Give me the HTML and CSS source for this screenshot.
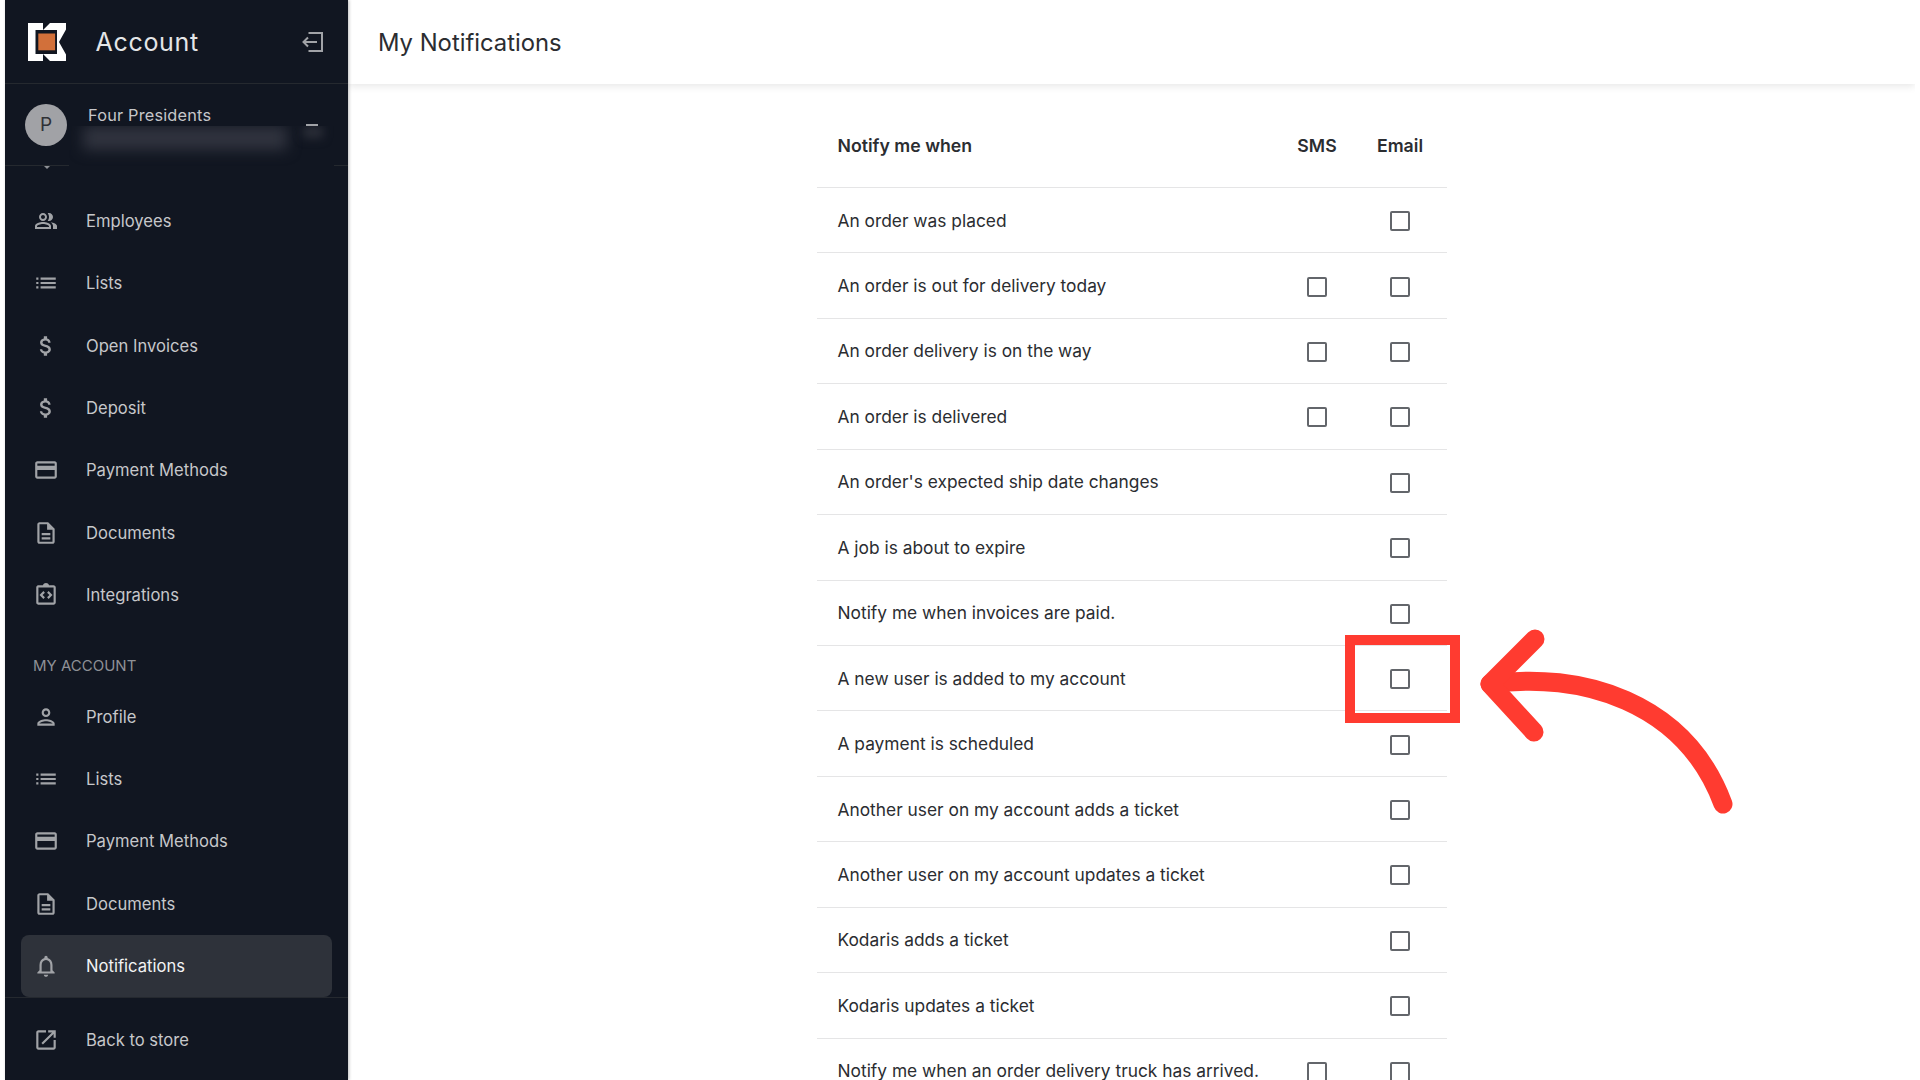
FILE: index.html
```html
<!DOCTYPE html>
<html lang="en">
<head>
<meta charset="utf-8">
<title>My Notifications</title>
<link rel="stylesheet" href="styles.css">
</head>
<body>
<svg class="defs" width="0" height="0" aria-hidden="true">
  <defs>
    <symbol id="i-people" viewBox="0 0 24 24"><path d="M16.67 13.13C18.04 14.06 19 15.32 19 17v3h4v-3c0-2.18-3.57-3.47-6.33-3.87zM15 12c2.21 0 4-1.79 4-4s-1.79-4-4-4c-.47 0-.91.1-1.33.24C14.5 5.27 15 6.58 15 8s-.5 2.73-1.33 3.76c.42.14.86.24 1.33.24zM9 12c2.21 0 4-1.79 4-4s-1.79-4-4-4-4 1.79-4 4 1.79 4 4 4zm0-6c1.1 0 2 .9 2 2s-.9 2-2 2-2-.9-2-2 .9-2 2-2zm0 7c-2.67 0-8 1.34-8 4v3h16v-3c0-2.66-5.33-4-8-4zm6 5H3v-.99C3.2 16.29 6.3 15 9 15s5.8 1.29 6 2v1z"/></symbol>
    <symbol id="i-list" viewBox="0 0 24 24"><path d="M3 13h2v-2H3v2zm0 4h2v-2H3v2zm0-8h2V7H3v2zm4 4h14v-2H7v2zm0 4h14v-2H7v2zM7 7v2h14V7H7z"/></symbol>
    <symbol id="i-dollar" viewBox="0 0 24 24"><path d="M11.8 10.9c-2.27-.59-3-1.2-3-2.15 0-1.09 1.01-1.85 2.7-1.85 1.78 0 2.44.85 2.5 2.1h2.21c-.07-1.72-1.12-3.3-3.21-3.81V3h-3v2.16c-1.94.42-3.5 1.68-3.5 3.61 0 2.31 1.91 3.46 4.7 4.13 2.5.6 3 1.48 3 2.41 0 .69-.49 1.79-2.7 1.79-2.06 0-2.87-.92-2.98-2.1h-2.2c.12 2.19 1.76 3.42 3.68 3.83V21h3v-2.15c1.95-.37 3.5-1.5 3.5-3.55 0-2.84-2.43-3.81-4.7-4.4z"/></symbol>
    <symbol id="i-card" viewBox="0 0 24 24"><path d="M20 4H4c-1.11 0-1.99.89-1.99 2L2 18c0 1.11.89 2 2 2h16c1.11 0 2-.89 2-2V6c0-1.11-.89-2-2-2zm0 14H4v-6h16v6zm0-10H4V6h16v2z"/></symbol>
    <symbol id="i-doc" viewBox="0 0 24 24"><path d="M8 16h8v2H8zm0-4h8v2H8zm6-10H6c-1.1 0-2 .9-2 2v16c0 1.1.89 2 1.99 2H18c1.1 0 2-.9 2-2V8l-6-6zm4 18H6V4h7v5h5v11z"/></symbol>
    <symbol id="i-integ" viewBox="0 0 24 24"><path d="M11 14.17L8.83 12 11 9.83 9.59 8.41 6 12l3.59 3.59zm3.41 1.42L18 12l-3.59-3.59L13 9.83 15.17 12 13 14.17zM19 3h-4.18C14.4 1.84 13.3 1 12 1s-2.4.84-2.82 2H5c-.14 0-.27.01-.4.04-.39.08-.74.28-1.01.55-.18.18-.33.4-.43.64-.1.23-.16.49-.16.77v14c0 .27.06.54.16.78s.25.45.43.64c.27.27.62.47 1.01.55.13.02.26.03.4.03h14c1.1 0 2-.9 2-2V5c0-1.1-.9-2-2-2zm0 16H5V5h14v14z"/></symbol>
    <symbol id="i-person" viewBox="0 0 24 24"><path d="M12 6c1.1 0 2 .9 2 2s-.9 2-2 2-2-.9-2-2 .9-2 2-2m0 10c2.7 0 5.8 1.29 6 2H6c.23-.72 3.31-2 6-2m0-12C9.79 4 8 5.79 8 8s1.79 4 4 4 4-1.79 4-4-1.79-4-4-4zm0 10c-2.67 0-8 1.34-8 4v2h16v-2c0-2.66-5.33-4-8-4z"/></symbol>
    <symbol id="i-bell" viewBox="0 0 24 24"><path d="M12 22c1.1 0 2-.9 2-2h-4c0 1.1.9 2 2 2zm6-6v-5c0-3.07-1.63-5.64-4.5-6.32V4c0-.83-.67-1.5-1.5-1.5s-1.5.67-1.5 1.5v.68C7.64 5.36 6 7.92 6 11v5l-2 2v1h16v-1l-2-2zm-2 1H8v-6c0-2.48 1.51-4.5 4-4.5s4 2.02 4 4.5v6z"/></symbol>
    <symbol id="i-open" viewBox="0 0 24 24"><path d="M19 19H5V5h7V3H5c-1.11 0-2 .9-2 2v14c0 1.1.89 2 2 2h14c1.1 0 2-.9 2-2v-7h-2v7zM14 3v2h3.59l-9.83 9.83 1.41 1.41L19 6.41V10h2V3h-7z"/></symbol>
  </defs>
</svg>
<div class="page">
  <aside class="sidebar">
    <div class="brand">
      <svg class="logo" viewBox="0 0 38 38"><path fill="#fff" d="M0 0H15V7H7.500V31H15V38H0Z"/><path fill="#fff" d="M15 7 22 0H38V6.500L31 19 38 31.500V38H22L15 31H29V7Z"/><rect x="10.300" y="10.500" width="16.800" height="16.800" fill="#d2703a"/></svg>
      <span class="brand-name">Account</span>
      <svg class="exit" viewBox="0 0 21 20"><path d="M6.500 1H20V19H6.500M1.500 10H15M6 5.500 1.500 10 6 14.500" fill="none" stroke="#a1a3a7" stroke-width="2"/></svg>
    </div>
    <div class="user">
      <span class="avatar">P</span>
      <div class="user-text">
        <div class="user-name">Four Presidents</div>
      </div>
      <span class="collapse"></span>
      <div class="mask"><div class="smear"></div><div class="glow"></div></div>
      <span class="peek"></span>
    </div>
    <nav class="nav">
      <a class="item"><svg class="ico people"><use href="#i-people"/></svg>Employees</a>
      <a class="item"><svg class="ico"><use href="#i-list"/></svg>Lists</a>
      <a class="item"><svg class="ico"><use href="#i-dollar"/></svg>Open Invoices</a>
      <a class="item"><svg class="ico"><use href="#i-dollar"/></svg>Deposit</a>
      <a class="item"><svg class="ico"><use href="#i-card"/></svg>Payment Methods</a>
      <a class="item"><svg class="ico"><use href="#i-doc"/></svg>Documents</a>
      <a class="item"><svg class="ico"><use href="#i-integ"/></svg>Integrations</a>
      <div class="section">MY ACCOUNT</div>
      <a class="item"><svg class="ico"><use href="#i-person"/></svg>Profile</a>
      <a class="item"><svg class="ico"><use href="#i-list"/></svg>Lists</a>
      <a class="item"><svg class="ico"><use href="#i-card"/></svg>Payment Methods</a>
      <a class="item"><svg class="ico"><use href="#i-doc"/></svg>Documents</a>
      <a class="item active"><svg class="ico"><use href="#i-bell"/></svg>Notifications</a>
    </nav>
    <div class="foot">
      <a class="item"><svg class="ico"><use href="#i-open"/></svg>Back to store</a>
    </div>
  </aside>
  <main class="main">
    <header class="topbar">My Notifications</header>
    <div class="content">
      <table class="table">
        <thead>
          <tr><th class="label">Notify me when</th><th class="sms">SMS</th><th class="email">Email</th></tr>
        </thead>
        <tbody>
          <tr><td class="label">An order was placed</td><td></td><td><span class="box"></span></td></tr>
          <tr><td class="label">An order is out for delivery today</td><td><span class="box"></span></td><td><span class="box"></span></td></tr>
          <tr><td class="label">An order delivery is on the way</td><td><span class="box"></span></td><td><span class="box"></span></td></tr>
          <tr><td class="label">An order is delivered</td><td><span class="box"></span></td><td><span class="box"></span></td></tr>
          <tr><td class="label">An order's expected ship date changes</td><td></td><td><span class="box"></span></td></tr>
          <tr><td class="label">A job is about to expire</td><td></td><td><span class="box"></span></td></tr>
          <tr><td class="label">Notify me when invoices are paid.</td><td></td><td><span class="box"></span></td></tr>
          <tr><td class="label">A new user is added to my account</td><td></td><td class="marked"><span class="box"></span><span class="redbox"></span>
            <svg class="arrow" viewBox="0 0 265 190"><path d="M20 58C110 45 215 75 253 178" fill="none" stroke="#ff3b30" stroke-width="19" stroke-linecap="round"/><path d="M65 13 20 58 64 106" fill="none" stroke="#ff3b30" stroke-width="19" stroke-linecap="round" stroke-linejoin="round"/></svg>
          </td></tr>
          <tr><td class="label">A payment is scheduled</td><td></td><td><span class="box"></span></td></tr>
          <tr><td class="label">Another user on my account adds a ticket</td><td></td><td><span class="box"></span></td></tr>
          <tr><td class="label">Another user on my account updates a ticket</td><td></td><td><span class="box"></span></td></tr>
          <tr><td class="label">Kodaris adds a ticket</td><td></td><td><span class="box"></span></td></tr>
          <tr><td class="label">Kodaris updates a ticket</td><td></td><td><span class="box"></span></td></tr>
          <tr><td class="label">Notify me when an order delivery truck has arrived.</td><td><span class="box"></span></td><td><span class="box"></span></td></tr>
        </tbody>
      </table>
    </div>
  </main>
</div>
</body>
</html>
```
FILE: styles.css
```css
* { box-sizing: border-box; }
html, body { margin: 0; height: 100%; overflow: hidden; background: #fff; }
body { font-family: Inter, "Liberation Sans", sans-serif; color: #2b2d31; }
.defs { position: absolute; }
.page { display: flex; height: 1080px; padding: 0 5px; }
.sidebar { width: 343px; flex: none; height: 1080px; background: #111621; display: flex; flex-direction: column; color: #c6c7ca; box-shadow: 1px 0 3px rgba(0,0,0,.25); position: relative; z-index: 2; }
.brand { height: 84px; flex: none; display: flex; align-items: center; padding: 0 25px 0 22.500px; border-bottom: 1px solid #25292f; }
.logo { width: 38px; height: 38px; flex: none; }
.brand-name { flex: 1; margin-left: 30px; font-size: 25px; letter-spacing: .7px; color: #e4e5e7; }
.exit { width: 21px; height: 20px; flex: none; margin-top: 1px; }
.user { height: 82px; flex: none; position: relative; display: flex; align-items: center; padding-left: 20px; border-bottom: 1px solid #25292f; }
.avatar { width: 42px; height: 42px; border-radius: 50%; background: #a1a2a6; color: #2f3136; display: flex; align-items: center; justify-content: center; font-size: 19px; flex: none; }
.user-text { margin-left: 21px; align-self: flex-start; padding-top: 21px; }
.user-name { font-size: 16.300px; line-height: 20px; color: #c6c7ca; letter-spacing: .2px; }
.collapse { position: absolute; left: 301px; top: 40px; width: 12px; height: 3px; background: #a1a3a7; }
.mask { position: absolute; left: 64px; top: 42px; width: 265px; height: 46px; background: #111621; overflow: hidden; }
.smear { position: absolute; left: 14px; top: 0; width: 204px; height: 24px; background: #30333e; filter: blur(7px); }
.glow { position: absolute; left: 234px; top: 0; width: 20px; height: 12px; background: #2b2e38; filter: blur(5px); }
.peek { position: absolute; left: 39px; top: 82px; border: 3px solid transparent; border-top-color: #8e9096; border-bottom: 0; }
.nav { flex: 1; padding: 23.700px 16px 0; overflow: hidden; }
.item { height: 62.4px; display: flex; align-items: center; padding-left: 12px; font-size: 16.600px; color: #c6c7ca; border-radius: 8px; }
.item.active { background: #2e323a; color: #f2f3f4; height: 62.500px; }
.ico { width: 26px; height: 26px; flex: none; fill: #a1a3a7; margin-right: 27px; }
.ico.people { width: 24px; height: 24px; margin-left: 1px; margin-right: 28px; }
.section { font-size: 15px; color: #8e9096; padding: 29px 0 0 12px; height: 59px; line-height: 22px; }
.foot { height: 83px; flex: none; border-top: 1px solid #25292f; padding: 11px 16px 0; }
.main { flex: 1; min-width: 0; overflow: hidden; }
.topbar { height: 84px; padding: 1px 0 0 30px; box-shadow: 0 2px 8px rgba(0,0,0,.1); display: flex; align-items: center; font-size: 23.800px; color: #2b2d31; }
.content { padding-top: 19.400px; display: flex; justify-content: center; }
.table { width: 630px; border-collapse: collapse; font-size: 17.350px; }
.table th, .table td { border-bottom: 1px solid #e5e5e6; text-align: center; padding: 0; height: 65.450px; }
.table th { height: 84px; font-weight: 600; font-size: 17.700px; }
.table .sms { width: 73px; }
.table .email { width: 93px; }
.table .label { text-align: left; padding-left: 21px; }
.box { display: block; width: 20px; height: 20px; margin: 2px auto 0; border: 2.700px solid #63666b; border-radius: 2px; }
.marked { position: relative; }
.redbox { position: absolute; left: -8.500px; top: -11px; width: 114.500px; height: 88px; border: 10px solid #ff3b30; }
.arrow { position: absolute; left: 116.500px; top: -20px; width: 265px; height: 190px; }
```
